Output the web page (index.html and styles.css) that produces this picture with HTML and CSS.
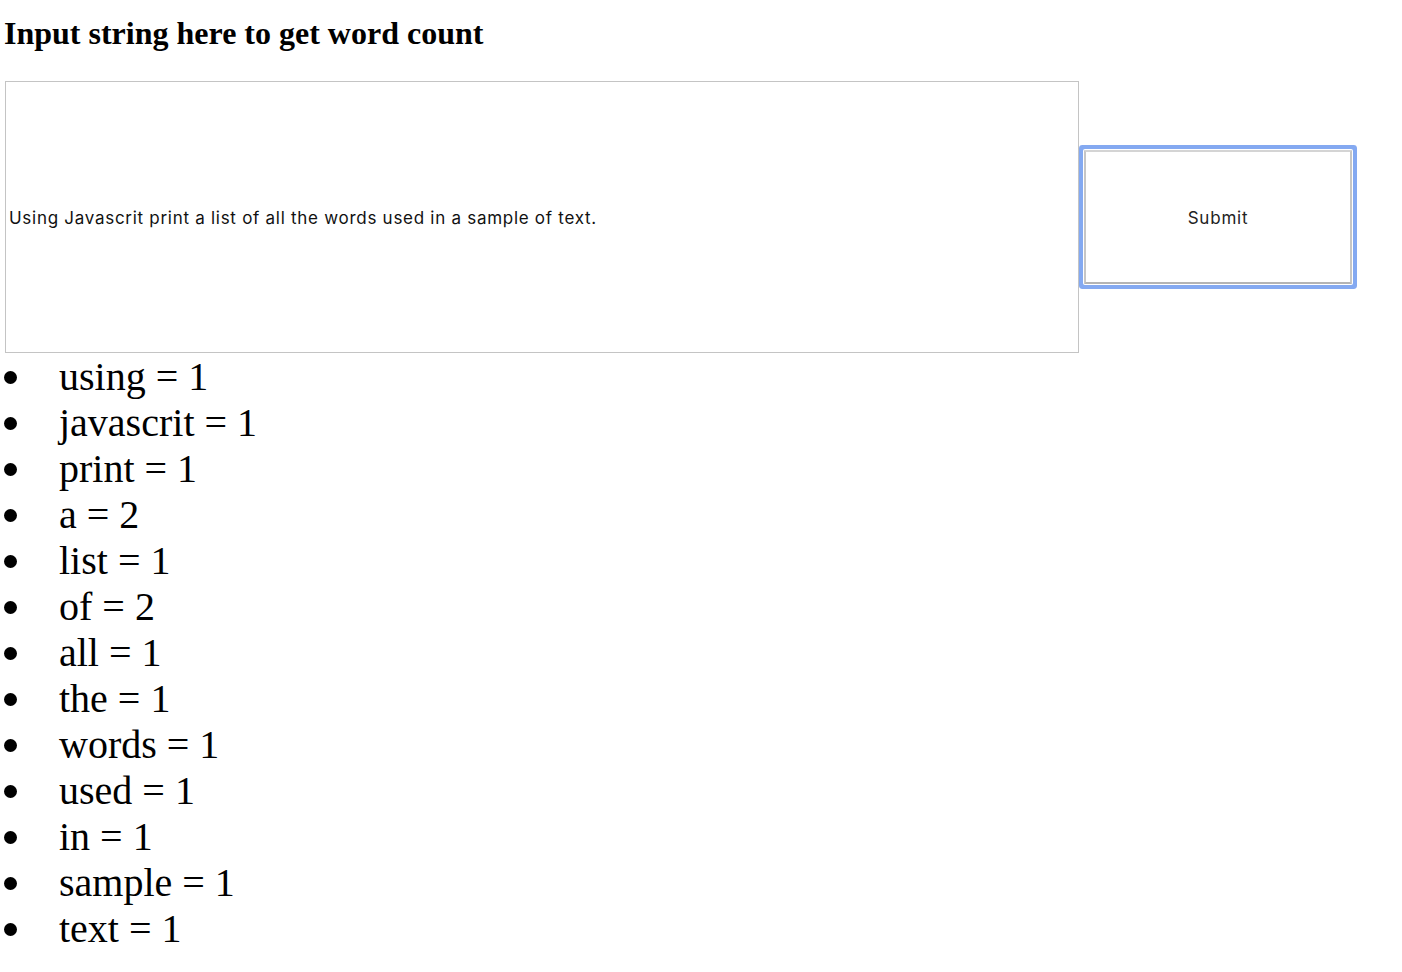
FILE: index.html
```html
<!DOCTYPE html>
<html>
<head>
<meta charset="utf-8">
<title>Word count</title>
<link rel="stylesheet" href="styles.css">
</head>
<body>
<h1 class="title">Input string here to get word count</h1>
<form class="form">
  <input class="text-input" type="text" value="Using Javascrit print a list of all the words used in a sample of text.">
  <button class="submit" type="button">Submit</button>
</form>
<ul class="words">
  <li>using = 1</li>
  <li>javascrit = 1</li>
  <li>print = 1</li>
  <li>a = 2</li>
  <li>list = 1</li>
  <li>of = 2</li>
  <li>all = 1</li>
  <li>the = 1</li>
  <li>words = 1</li>
  <li>used = 1</li>
  <li>in = 1</li>
  <li>sample = 1</li>
  <li>text = 1</li>
</ul>
</body>
</html>
```
FILE: styles.css
```css
html, body {
  margin: 0;
  padding: 0;
  background: #fff;
}
body {
  padding-left: 4px;
  font-family: "Liberation Serif", "Times New Roman", serif;
  color: #000;
}
.title {
  font-size: 32px;
  font-weight: bold;
  margin: 15px 0 0 0;
  line-height: normal;
}
.form {
  display: flex;
  align-items: center;
  margin-top: 29px;
}
.text-input {
  box-sizing: border-box;
  width: 1074px;
  height: 272px;
  margin: 0 0 0 1px;
  padding: 2px 3px 0 3px;
  border: 1px solid #c4c4c4;
  background: #fff;
  font-family: "Inter", "Liberation Sans", sans-serif;
  font-size: 17px;
  letter-spacing: 0.72px;
  color: #111;
  outline: none;
}
.submit {
  box-sizing: border-box;
  width: 268px;
  height: 134px;
  margin: 0 0 0 5px;
  padding: 2px 0 0 0;
  background: #fff;
  border: 2px solid;
  border-color: #d4d4d4 #c6c6c6 #b4b4b4 #c6c6c6;
  box-shadow: 0 0 0 1px #fff, 0 0 0 5px #84a9f1;
  border-radius: 1px;
  font-family: "Inter", "Liberation Sans", sans-serif;
  font-size: 17px;
  letter-spacing: 0.8px;
  color: #222;
}
.words {
  list-style: none;
  margin: 1px 0 0 0;
  padding: 0;
  font-size: 40px;
  line-height: 46px;
}
.words li {
  display: flex;
  align-items: center;
}
.words li::before {
  content: "";
  width: 13px;
  height: 13px;
  border-radius: 50%;
  background: #000;
  margin-right: 42px;
  flex: none;
}
```
